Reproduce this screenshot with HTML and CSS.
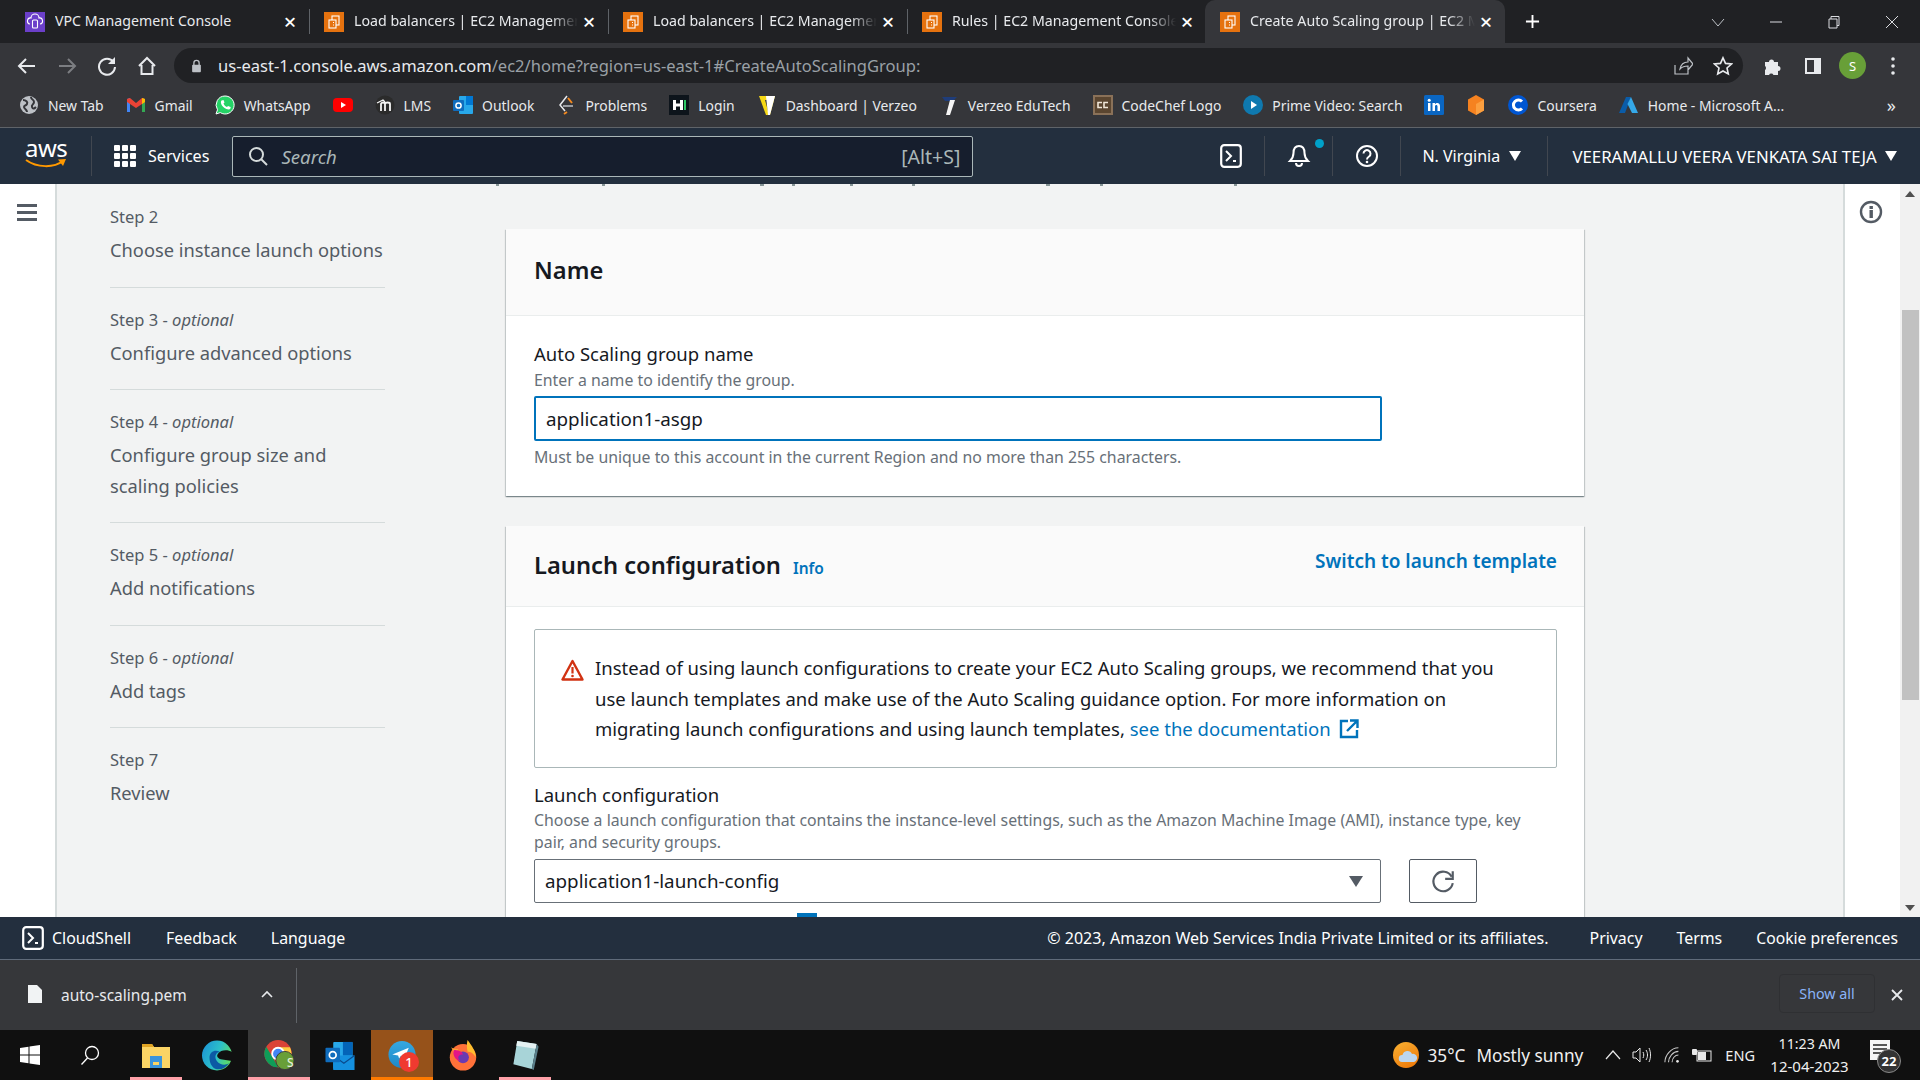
FILE: index.html
```html
<!DOCTYPE html>
<html lang="en">
<head>
<meta charset="utf-8">
<title>Create Auto Scaling group | EC2 Management Console</title>
<link rel="stylesheet" href="styles.css">
</head>
<body>
<svg class="defs" width="0" height="0">
  <defs>
    <linearGradient id="edgeG" x1="0" y1="0" x2="1" y2="0.4"><stop offset="0" stop-color="#1a8fd8"/><stop offset=".6" stop-color="#2cc0c8"/><stop offset="1" stop-color="#5ad96c"/></linearGradient>
    <linearGradient id="sunG" x1="0" y1="0" x2="0.6" y2="1"><stop offset="0" stop-color="#f9b233"/><stop offset="1" stop-color="#ee7d0c"/></linearGradient>
    <linearGradient id="tgG" x1="0" y1="0" x2="0" y2="1"><stop offset="0" stop-color="#36a8e0"/><stop offset="1" stop-color="#1e88c8"/></linearGradient>
  </defs>
  <symbol id="ec2" viewBox="0 0 20 20"><rect width="20" height="20" fill="#e5720f"/><g fill="none" stroke="#fff" stroke-width="1.100"><rect x="8" y="4" width="7" height="9"/><rect x="5" y="8" width="7" height="8" fill="#e5720f"/><path d="M9 10.500h1M9 13h1"/></g></symbol>
  <symbol id="shell" viewBox="0 0 22 24"><rect x="1.200" y="1.200" width="19.600" height="21.600" rx="3" fill="none" stroke="#fff" stroke-width="2.200"/><path d="M6 7l5 5-5 5" fill="none" stroke="#fff" stroke-width="2"/><path d="M13 17h3" stroke="#fff" stroke-width="2"/></symbol>
</svg>
<div class="app">
  <header class="tabstrip">
    <div class="tab">
      <svg class="fav" viewBox="0 0 20 20"><rect width="20" height="20" fill="#6b3fc9"/><g fill="none" stroke="#fff" stroke-width="1.100"><path d="M5 12a3 3 0 0 1 1-6 4 4 0 0 1 8 0 3 3 0 0 1 1 6"/><rect x="7.500" y="8" width="5" height="8" rx="1"/></g></svg>
      <span class="tab-title">VPC Management Console</span><span class="tab-x">×</span>
    </div>
    <div class="tab sep">
      <svg class="fav"><use href="#ec2"/></svg>
      <span class="tab-title">Load balancers | EC2 Management Console</span><span class="tab-x">×</span>
    </div>
    <div class="tab sep">
      <svg class="fav"><use href="#ec2"/></svg>
      <span class="tab-title">Load balancers | EC2 Management Console</span><span class="tab-x">×</span>
    </div>
    <div class="tab sep">
      <svg class="fav"><use href="#ec2"/></svg>
      <span class="tab-title">Rules | EC2 Management Console</span><span class="tab-x">×</span>
    </div>
    <div class="tab active">
      <svg class="fav"><use href="#ec2"/></svg>
      <span class="tab-title">Create Auto Scaling group | EC2 Management</span><span class="tab-x">×</span>
    </div>
    <svg class="newtab" viewBox="0 0 16 16"><path d="M8 1v14M1 8h14" stroke="#fff" stroke-width="2"/></svg>
    <div class="winctl">
      <svg viewBox="0 0 14 14" class="w-ch"><path d="M1 4l6 7 6-7" fill="none" stroke="#bdc1c6" stroke-width="1"/></svg>
      <svg viewBox="0 0 14 14"><path d="M1 7h12" stroke="#dadce0" stroke-width="1"/></svg>
      <svg viewBox="0 0 14 14"><path d="M2 4h8v9H2zM4 4V1.500h8v9h-2" fill="none" stroke="#dadce0" stroke-width="1"/></svg>
      <svg viewBox="0 0 14 14"><path d="M1 1l12 12M13 1L1 13" stroke="#dadce0" stroke-width="1"/></svg>
    </div>
  </header>

  <div class="toolbar">
    <svg class="tb" viewBox="0 0 20 20"><path d="M18 10H3M9 3l-7 7 7 7" fill="none" stroke="#e8eaed" stroke-width="2"/></svg>
    <svg class="tb" viewBox="0 0 20 20"><path d="M2 10h15M11 3l7 7-7 7" fill="none" stroke="#7c7e82" stroke-width="2"/></svg>
    <svg class="tb" viewBox="0 0 20 20"><path d="M16.500 6A8 8 0 1 0 18 11" fill="none" stroke="#e8eaed" stroke-width="2"/><path d="M18 1v7h-7z" fill="#e8eaed"/></svg>
    <svg class="tb" viewBox="0 0 20 20"><path d="M2 10l8-8 8 8M4.500 9v9h11V9" fill="none" stroke="#e8eaed" stroke-width="2"/></svg>
    <div class="urlbar">
      <svg class="lock" viewBox="0 0 12 16"><path d="M3 7V4.500a3 3 0 0 1 6 0V7" fill="none" stroke="#bdc1c6" stroke-width="1.500"/><rect x="1" y="6.500" width="10" height="8.500" rx="1" fill="#bdc1c6"/></svg>
      <span class="url"><b>us-east-1.console.aws.amazon.com</b>/ec2/home?region=us-east-1#CreateAutoScalingGroup:</span>
      <svg class="share" viewBox="0 0 20 20"><path d="M2 9v9h13v-4M7 13c1-5 4-7 8-7V2l5 6-5 6v-4c-3 0-6 1-8 3z" fill="none" stroke="#bdc1c6" stroke-width="1.200"/></svg>
      <svg class="star" viewBox="0 0 20 20"><path d="M10 1.800l2.500 5.600 6 .6-4.500 4 1.300 6L10 15l-5.300 3 1.300-6-4.500-4 6-.6z" fill="none" stroke="#e8eaed" stroke-width="1.600"/></svg>
    </div>
    <svg class="ext" viewBox="0 0 20 20"><path d="M2 6h4a2.500 2.500 0 0 1 5 0h4v4a2.500 2.500 0 0 1 0 5v4h-4.500a2.500 2.500 0 0 0-4.500 0H2v-5a2.500 2.500 0 0 0 0-4z" fill="#e8eaed"/></svg>
    <svg class="side" viewBox="0 0 20 20"><rect x="2" y="2" width="16" height="16" fill="#e8eaed"/><rect x="4" y="4" width="7" height="12" fill="#35363a"/></svg>
    <span class="avatar">S</span>
    <svg class="dots" viewBox="0 0 4 18"><circle cx="2" cy="2" r="1.800" fill="#e8eaed"/><circle cx="2" cy="9" r="1.800" fill="#e8eaed"/><circle cx="2" cy="16" r="1.800" fill="#e8eaed"/></svg>
  </div>

  <nav class="bookmarks">
    <span class="bm"><svg viewBox="0 0 20 20"><circle cx="10" cy="10" r="9" fill="#bdc1c6"/><path d="M4 5c3 0 5 2 4 4s-3 1-3 3 3 2 3 5M12 2c0 3 3 2 3 5s-3 2-2 5 3 1 4 0" fill="none" stroke="#35363a" stroke-width="2"/></svg>New Tab</span>
    <span class="bm"><svg viewBox="0 0 20 20"><path d="M1 17V4l3-1v14z" fill="#4285f4"/><path d="M16 17V3l3 1v13z" fill="#34a853"/><path d="M1 4l3-1 6 5 6-5 3 1v3l-9 6-9-6z" fill="#ea4335"/><path d="M16 3l3 1v3l-3 2z" fill="#fbbc04"/></svg>Gmail</span>
    <span class="bm"><svg viewBox="0 0 20 20"><path d="M10 1a9 9 0 0 0-7.500 13.800L1 19l4.300-1.400A9 9 0 1 0 10 1z" fill="#25d366" stroke="#fff" stroke-width="1"/><path d="M6.500 5.500c-2 2 1 8 7 9 2 0 2.500-2 2-2.500l-2.500-1-1 1c-1.500-.5-3-2-3.500-3.500l1-1-1-2.500z" fill="#fff"/></svg>WhatsApp</span>
    <span class="bm"><svg viewBox="0 0 20 20"><rect y="3" width="20" height="14" rx="4" fill="#f00"/><path d="M8 7l5 3-5 3z" fill="#fff"/></svg></span>
    <span class="bm"><svg viewBox="0 0 20 20"><circle cx="10" cy="10" r="9.500" fill="#2b2b2b"/><path d="M6 16V9c0-2 4-2 4 0v7M10 9c0-2 5-2 5 0v7" fill="none" stroke="#f5f5f5" stroke-width="1.800"/><path d="M2 8l6-3 2 2" fill="none" stroke="#f5f5f5" stroke-width="1.300"/></svg>LMS</span>
    <span class="bm"><svg viewBox="0 0 20 20"><rect x="6" y="1" width="14" height="18" rx="1" fill="#28a8ea"/><rect x="13" y="1" width="7" height="9" fill="#0078d4"/><rect y="5" width="11" height="11" rx="1" fill="#0f6cbd"/><circle cx="5.500" cy="10.500" r="2.600" fill="none" stroke="#fff" stroke-width="1.500"/></svg>Outlook</span>
    <span class="bm"><svg viewBox="0 0 20 20"><path d="M11 1L4 10l5 6" fill="none" stroke="#e8eaed" stroke-width="1.500"/><path d="M12 3l4 5M8 19l3-2" stroke="#f58a1f" stroke-width="2"/><path d="M7 11h10" stroke="#bdc1c6" stroke-width="1.500"/></svg>Problems</span>
    <span class="bm"><svg viewBox="0 0 20 20"><rect width="20" height="20" fill="#0d141b"/><rect x="4" y="5" width="3" height="10" fill="#fff"/><rect x="7" y="8.500" width="4" height="3" fill="#fff"/><rect x="11" y="5" width="3" height="10" fill="#fff"/><rect x="15" y="5" width="2" height="10" fill="#2ec866"/></svg>Login</span>
    <span class="bm"><svg viewBox="0 0 20 20"><path d="M2 1h16l-5 19H9z" fill="#f6d916"/><path d="M8 5h5l-2 11z" fill="#35363a"/><path d="M9 1h9l-5 19h-2z" fill="#fff"/></svg>Dashboard | Verzeo</span>
    <span class="bm"><svg viewBox="0 0 20 20"><path d="M3 2h15l-4 4H6z" fill="#1f3d7a"/><path d="M11 5h5l-5 15H7z" fill="#f5f5f5"/></svg>Verzeo EduTech</span>
    <span class="bm"><svg viewBox="0 0 20 20"><rect width="20" height="20" fill="#8a7158"/><rect x="2" y="2" width="16" height="16" fill="#5b4630"/><path d="M9 7.500H5v5h4M15 7.500h-4v5h4" fill="none" stroke="#f0e6d8" stroke-width="1.600"/></svg>CodeChef Logo</span>
    <span class="bm"><svg viewBox="0 0 20 20"><circle cx="10" cy="10" r="10" fill="#0f79af"/><path d="M8 6l6 4-6 4z" fill="#fff"/></svg>Prime Video: Search</span>
    <span class="bm"><svg viewBox="0 0 20 20"><rect width="20" height="20" rx="1.500" fill="#0a66c2"/><path d="M4 8h2.500v8H4zM8.500 8H11v1.200C12.500 7 16 7.500 16 11v5h-2.500v-4.500c0-2-2.500-2-2.500 0V16H8.500z" fill="#fff"/><circle cx="5.200" cy="5.300" r="1.500" fill="#fff"/></svg></span>
    <span class="bm"><svg viewBox="0 0 20 20"><path d="M10 0l8 4.500v11L10 20l-8-4.500v-11z" fill="#f58220"/><path d="M10 9l8-4.500v11L10 20z" fill="#fb9f3f"/></svg></span>
    <span class="bm"><svg viewBox="0 0 20 20"><circle cx="10" cy="10" r="10" fill="#0056d2"/><path d="M14 6.500A5 5 0 1 0 14 13.500" fill="none" stroke="#fff" stroke-width="3"/></svg>Coursera</span>
    <span class="bm"><svg viewBox="0 0 20 20"><path d="M7 2h5L6 18H0z" fill="#0a5ca8"/><path d="M12 2l7 16h-6L8.500 9z" fill="#35a8e8"/></svg>Home - Microsoft A...</span>
    <span class="more">»</span>
  </nav>

  <div class="awsnav">
    <div class="logo"><span class="logo-t">aws</span><svg viewBox="0 0 42 10"><path d="M1 2c11 8 28 8 37 1" fill="none" stroke="#f90" stroke-width="2"/><path d="M33 1.500l8-.5-3 7z" fill="#f90"/></svg></div>
    <div class="services">
      <svg viewBox="0 0 22 22"><g fill="#fff"><rect width="6" height="6" rx="1"/><rect x="8" width="6" height="6" rx="1"/><rect x="16" width="6" height="6" rx="1"/><rect y="8" width="6" height="6" rx="1"/><rect x="8" y="8" width="6" height="6" rx="1"/><rect x="16" y="8" width="6" height="6" rx="1"/><rect y="16" width="6" height="6" rx="1"/><rect x="8" y="16" width="6" height="6" rx="1"/><rect x="16" y="16" width="6" height="6" rx="1"/></g></svg>
      <span>Services</span>
    </div>
    <div class="search">
      <svg viewBox="0 0 20 20"><circle cx="8.500" cy="8.500" r="6.500" fill="none" stroke="#d5dbdb" stroke-width="2"/><path d="M13 13l6 6" stroke="#d5dbdb" stroke-width="2"/></svg>
      <span class="ph">Search</span><span class="key">[Alt+S]</span>
    </div>
    <div class="nav-icons">
      <span class="ni"><svg class="s-ic" viewBox="0 0 22 24"><use href="#shell"/></svg></span>
      <span class="ni bell"><svg viewBox="0 0 22 24"><path d="M11 2c-4 0-5.500 3-5.500 7 0 4-1.500 6-3.500 8h18c-2-2-3.500-4-3.500-8 0-4-1.500-7-5.500-7z" fill="none" stroke="#fff" stroke-width="2"/><path d="M8 19a3 3 0 0 0 6 0" fill="none" stroke="#fff" stroke-width="2"/></svg><i class="dot"></i></span>
      <span class="ni"><svg viewBox="0 0 24 24"><circle cx="12" cy="12" r="10" fill="none" stroke="#fff" stroke-width="2"/><path d="M8.500 9.500a3.500 3.500 0 1 1 5.500 3c-1.300.8-2 1.300-2 3" fill="none" stroke="#fff" stroke-width="2"/><circle cx="12" cy="18" r="1.300" fill="#fff"/></svg></span>
    </div>
    <div class="region">N. Virginia<i class="caret"></i></div>
    <div class="user">VEERAMALLU VEERA VENKATA SAI TEJA<i class="caret"></i></div>
  </div>

  <div class="stage">
    <aside class="rail"><i class="ham"></i><i class="ham"></i><i class="ham"></i></aside>
    <main class="main">
      <svg class="peek-top" viewBox="0 0 750 3"><g fill="#879596"><rect x="0" width="3" height="2"/><rect x="106" width="3" height="2"/><rect x="264" width="4" height="2"/><rect x="296" width="3" height="2"/><rect x="354" width="3" height="2"/><rect x="416" width="3" height="2"/><rect x="550" width="4" height="2"/><rect x="604" width="3" height="2"/><rect x="738" width="3" height="2"/></g></svg>
      <ol class="steps">
        <li class="step"><div class="step-no">Step 2</div><div class="step-t">Choose instance launch options</div></li>
        <li class="step"><div class="step-no">Step 3 - <em>optional</em></div><div class="step-t">Configure advanced options</div></li>
        <li class="step"><div class="step-no">Step 4 - <em>optional</em></div><div class="step-t">Configure group size and scaling policies</div></li>
        <li class="step"><div class="step-no">Step 5 - <em>optional</em></div><div class="step-t">Add notifications</div></li>
        <li class="step"><div class="step-no">Step 6 - <em>optional</em></div><div class="step-t">Add tags</div></li>
        <li class="step"><div class="step-no">Step 7</div><div class="step-t">Review</div></li>
      </ol>
      <div class="form">
        <section class="card">
          <div class="card-h name-h"><h2>Name</h2></div>
          <div class="card-b name-b">
            <div class="lbl">Auto Scaling group name</div>
            <div class="desc first">Enter a name to identify the group.</div>
            <div class="input focus">application1-asgp</div>
            <div class="desc hint">Must be unique to this account in the current Region and no more than 255 characters.</div>
          </div>
        </section>
        <section class="card second">
          <div class="card-h lc-h">
            <h2>Launch configuration</h2><a class="info">Info</a>
            <a class="switch">Switch to launch template</a>
          </div>
          <div class="card-b lc-b">
            <div class="alert">
              <svg class="warn" viewBox="0 0 23 22"><path d="M11.500 2L1.500 20.500h20z" fill="none" stroke="#d13212" stroke-width="2.400" stroke-linejoin="round"/><path d="M11.500 8v6.500" stroke="#d13212" stroke-width="2.200"/><circle cx="11.500" cy="17" r="1.300" fill="#d13212"/></svg>
              <p>Instead of using launch configurations to create your EC2 Auto Scaling groups, we recommend that you use launch templates and make use of the Auto Scaling guidance option. For more information on migrating launch configurations and using launch templates, <a class="doc">see the documentation<svg class="ext-l" viewBox="0 0 20 20"><path d="M9 2H2v16h16v-7" fill="none" stroke="#0073bb" stroke-width="2.400"/><path d="M8 12l10-10M11 1.500h7.500V9" fill="none" stroke="#0073bb" stroke-width="2.400"/></svg></a></p>
            </div>
            <div class="lbl lc-lbl">Launch configuration</div>
            <div class="desc lc-desc">Choose a launch configuration that contains the instance-level settings, such as the Amazon Machine Image (AMI), instance type, key pair, and security groups.</div>
            <div class="sel-row">
              <div class="input sel">application1-launch-config<i class="sel-caret"></i></div>
              <button class="refresh"><svg viewBox="0 0 24 24"><path d="M20 8A9 9 0 1 0 21 14" fill="none" stroke="#545b64" stroke-width="2"/><path d="M21 3v7h-7" fill="none" stroke="#545b64" stroke-width="2"/></svg></button>
            </div>
          </div>
        </section>
      </div>
      <i class="peek-bot"></i>
    </main>
    <aside class="tools">
      <svg viewBox="0 0 24 24"><circle cx="12" cy="12" r="10" fill="none" stroke="#545b64" stroke-width="2.400"/><rect x="10.500" y="10" width="3.400" height="8" fill="#545b64"/><rect x="10.500" y="6" width="3.400" height="3" fill="#545b64"/></svg>
    </aside>
    <div class="scrollbar"><i class="sb-up"></i><i class="thumb"></i><i class="sb-dn"></i></div>
  </div>

  <footer class="footer">
    <svg class="f-shell" viewBox="0 0 22 24"><use href="#shell"/></svg>
    <span class="f-cs">CloudShell</span><span class="f-fb">Feedback</span><span class="f-lang">Language</span>
    <span class="f-copy">© 2023, Amazon Web Services India Private Limited or its affiliates.</span>
    <span class="f-pr">Privacy</span><span class="f-tm">Terms</span><span class="f-ck">Cookie preferences</span>
  </footer>

  <div class="downloads">
    <svg class="dl-file" viewBox="0 0 14 18"><path d="M0 0h9l5 5v13H0z" fill="#f1f3f4"/></svg>
    <span class="dl-name">auto-scaling.pem</span>
    <svg class="dl-up" viewBox="0 0 12 8"><path d="M1 7l5-5 5 5" fill="none" stroke="#e8eaed" stroke-width="1.600"/></svg>
    <i class="dl-sep"></i>
    <span class="showall">Show all</span>
    <svg class="dl-x" viewBox="0 0 12 12"><path d="M1 1l10 10M11 1L1 11" stroke="#e8eaed" stroke-width="1.800"/></svg>
  </div>

  <div class="taskbar">
    <svg class="t-win" viewBox="0 0 20 20"><path d="M0 3l8.500-1.200V9.500H0zM9.500 1.600L20 0v9.500H9.500zM0 10.500h8.500v7.700L0 17zM9.500 10.500H20V20L9.500 18.400z" fill="#fff"/></svg>
    <svg class="t-search" viewBox="0 0 20 20"><circle cx="12" cy="8" r="6.500" fill="none" stroke="#fff" stroke-width="1.300"/><path d="M7.500 13L1.500 19.500" stroke="#fff" stroke-width="1.300"/></svg>
    <span class="t-app under"><svg viewBox="0 0 30 31"><path d="M1 4h10l2 3h16v21H1z" fill="#fbd465"/><path d="M1 4h10l2 3H1z" fill="#e0a424"/><path d="M9 16h12v12h-3v-6h-6v6H9z" fill="#3b94dc"/><rect x="12" y="25" width="6" height="3" fill="#3b94dc"/></svg></span>
    <span class="t-app"><svg viewBox="0 0 32 32"><circle cx="16" cy="16" r="16" fill="url(#edgeG)"/><path d="M33 13C28 9 20 10 17 14c-2 3 0 5 3 6l13 2z" fill="#101010"/><path d="M8 18c0-6 6-9 11-6-5 1-6 6-3 10 3 4 9 5 13 2-4 6-10 8-15 6-4-2-6-7-6-12z" fill="#0c59a4"/></svg></span>
    <span class="t-app active"><svg viewBox="0 0 32 34"><circle cx="15" cy="15" r="15" fill="#db4437"/><path d="M15 8h13a15 15 0 0 1-13 22l6-11z" fill="#ffcd40"/><path d="M15 30A15 15 0 0 1 2 7.500L9 19z" fill="#0f9d58"/><circle cx="15" cy="15" r="6.500" fill="#4285f4" stroke="#fff" stroke-width="2"/><circle cx="22.500" cy="22.500" r="10" fill="#689f38" stroke="#383838" stroke-width="1"/></svg><b class="ch-s">S</b></span>
    <span class="t-app"><svg viewBox="0 0 30 32"><rect x="8" y="2" width="20" height="28" rx="1" fill="#28a8ea"/><rect x="18" y="2" width="10" height="14" fill="#0364b8"/><path d="M8 16h22v15H8z" fill="#1490df"/><path d="M8 16l11 8 11-8" fill="none" stroke="#0a4a8c" stroke-width="1.200"/><rect y="8" width="15" height="15" rx="1" fill="#0f6cbd"/><circle cx="7.500" cy="15.500" r="3.500" fill="none" stroke="#fff" stroke-width="1.800"/></svg></span>
    <span class="t-app tg"><svg viewBox="0 0 28 32"><circle cx="14" cy="15" r="14" fill="url(#tgG)"/><path d="M4 15l17-7-5 12-3-4-2 3-1-3z" fill="#fff"/></svg><b class="badge">1</b></span>
    <span class="t-app"><svg viewBox="0 0 30 34"><circle cx="15" cy="19" r="14.500" fill="#ff7139"/><path d="M20 0c5 7 9 12 9 19-3-5-6-6-9-6-1-5-1-9 0-13z" fill="#ffbd2e"/><path d="M2 8c2 2 5 2 8 2l-4 6z" fill="#ffa436"/><circle cx="15" cy="19" r="6.500" fill="#6a3ab2"/><path d="M5 11c4 0 9 1 10 5-5-1-7 4-3 7-5 0-9-7-7-12z" fill="#e31587"/></svg></span>
    <span class="t-app under"><svg viewBox="0 0 30 32"><path d="M7 1l20 3-5 26-19-5z" fill="#a8d4d8"/><path d="M7 1l20 3-1 5-20-3z" fill="#e5f1f2"/><path d="M27 4l2 3-5 24-2-1z" fill="#5a7f8a"/></svg></span>
    <div class="tray">
      <svg class="wx" viewBox="0 0 26 26"><circle cx="13" cy="13" r="13" fill="url(#sunG)"/><path d="M9 20a3.500 3.500 0 0 1 .5-7 5 5 0 0 1 9.500-1 4 4 0 0 1 2 8z" fill="#bcd6ef"/></svg>
      <span class="temp">35°C</span><span class="wx-t">Mostly sunny</span>
      <svg class="tr-up" viewBox="0 0 16 10"><path d="M1 9l7-8 7 8" fill="none" stroke="#e8e8e8" stroke-width="1.200"/></svg>
      <svg class="tr-sp" viewBox="0 0 20 20"><path d="M1 7h3l4-4v14l-4-4H1zM11 7c1 2 1 4 0 6M14 5c2 3 2 7 0 10M17 3c2 4 2 10 0 14" fill="none" stroke="#e8e8e8" stroke-width="1"/></svg>
      <svg class="tr-wi" viewBox="0 0 20 20"><path d="M1 18C1 10 8 2 16 2M5 18c0-6 5-12 11-12M9 18c0-4 3-8 7-8" fill="none" stroke="#c8c8c8" stroke-width="1.200"/><circle cx="15" cy="17" r="1.500" fill="#e8e8e8"/></svg>
      <svg class="tr-bt" viewBox="0 0 20 20"><rect x="5" y="6" width="14" height="10" fill="none" stroke="#e8e8e8"/><rect x="6" y="7" width="8" height="8" fill="#e8e8e8"/><rect x="0" y="4" width="5" height="6" rx="1" fill="#e8e8e8"/></svg>
      <span class="eng">ENG</span>
      <div class="clock"><span>11:23 AM</span><span class="date">12-04-2023</span></div>
      <span class="notif"><svg viewBox="0 0 20 20"><rect width="20" height="20" fill="#f5f5f5"/><path d="M3 5h14M3 9h14M3 13h9" stroke="#222" stroke-width="1.500"/></svg><b>22</b></span>
    </div>
  </div>
</div>
</body>
</html>
```
FILE: styles.css
```css
* { box-sizing: border-box; }
html, body { margin: 0; padding: 0; height: 100%; overflow: hidden; }
body { font-family: "Noto Sans", "Open Sans", sans-serif; color: #16191f; }
.defs { position: absolute; }
i { display: block; font-style: normal; }
.app { width: 1920px; height: 1080px; display: flex; flex-direction: column; }

/* tab strip */
.tabstrip { height: 43px; background: #202124; display: flex; align-items: stretch; padding-left: 10px; color: #e8eaed; font-size: 14.200px; flex: none; }
.tab { width: 299px; display: flex; align-items: center; padding: 0 8px 0 15px; position: relative; }
.tab.sep::before { content: ""; position: absolute; left: 0; top: 9px; height: 25px; width: 1px; background: #5f6368; }
.tab.active { background: #35363a; border-radius: 10px 10px 0 0; width: 300px; margin-left: -1px; padding-left: 15px; }
.fav { width: 20px; height: 20px; flex: none; margin-right: 10px; }
.tab-title { flex: 1; min-width: 0; white-space: nowrap; overflow: hidden; padding-bottom: 3px; -webkit-mask-image: linear-gradient(90deg, #000 88%, transparent 100%); mask-image: linear-gradient(90deg, #000 88%, transparent 100%); }
.tab:first-child .tab-title { mask-image: none; -webkit-mask-image: none; }
.tab-x { width: 22px; text-align: center; color: #fff; font-size: 22px; line-height: 1; font-weight: 500; flex: none; padding-bottom: 2px; }
.newtab { width: 15px; height: 15px; align-self: center; margin-left: 20px; flex: none; }
.winctl { margin-left: auto; display: flex; align-items: center; padding-right: 21px; gap: 44px; }
.winctl svg { width: 14px; height: 14px; }

/* toolbar */
.toolbar { height: 42px; background: #35363a; display: flex; align-items: center; padding-left: 17px; flex: none; padding-top: 3px; }
.tb { width: 20px; height: 20px; margin-right: 20px; flex: none; }
.urlbar { width: 1569px; height: 35px; margin-left: -3px; background: #202124; border-radius: 18px; display: flex; align-items: center; padding-left: 17px; flex: none; }
.lock { width: 11px; height: 14px; flex: none; margin-right: 16px; }
.url { font-size: 16.550px; color: #9aa0a6; white-space: nowrap; flex: 1; }
.url b { color: #e8eaed; font-weight: 400; }
.share { width: 20px; height: 20px; margin-right: 20px; flex: none; }
.star { width: 20px; height: 20px; margin-right: 10px; flex: none; }
.ext { width: 20px; height: 20px; margin-left: 20px; flex: none; }
.side { width: 20px; height: 20px; margin-left: 20px; flex: none; }
.avatar { width: 27px; height: 27px; border-radius: 50%; background: #689f38; color: #fff; font-size: 13px; display: flex; align-items: center; justify-content: center; margin-left: 16px; flex: none; }
.dots { width: 4px; height: 18px; margin-left: 25px; flex: none; }

/* bookmarks */
.bookmarks { height: 43px; background: #35363a; border-bottom: 1px solid #5f6368; display: flex; align-items: center; padding-left: 19px; gap: 22px; flex: none; color: #e8eaed; font-size: 13.900px; white-space: nowrap; padding-bottom: 2px; }
.bm { display: flex; align-items: center; gap: 9px; }
.bm svg { width: 20px; height: 20px; flex: none; }
.more { margin-left: auto; margin-right: 24px; font-size: 18px; }

/* aws nav */
.awsnav { height: 56px; background: #232f3e; display: flex; align-items: center; flex: none; color: #fff; font-size: 16px; }
.logo { width: 92px; height: 40px; border-right: 1px solid #414750; padding-left: 25px; position: relative; display: flex; flex-direction: column; align-items: flex-start; flex: none; }
.logo-t { font-size: 24px; line-height: 22px; font-weight: 400; letter-spacing: -.5px; margin-top: 1px; }
.logo svg { width: 42px; height: 10px; margin-top: -1px; }
.services { display: flex; align-items: center; gap: 12px; margin-left: 22px; flex: none; font-size: 16.100px; }
.services svg { width: 22px; height: 22px; }
.search { width: 741px; height: 41px; margin-left: 23px; background: #161e2d; border: 1px solid #aab7b8; border-radius: 2px; display: flex; align-items: center; padding: 0 12px 0 15px; flex: none; color: #aab7b8; font-size: 18.600px; }
.search svg { width: 20px; height: 20px; margin-right: 13px; }
.ph { font-style: italic; flex: 1; }
.key { font-size: 19.500px; }
.nav-icons { display: flex; margin-left: 224px; flex: none; }
.ni { width: 68px; height: 40px; display: flex; align-items: center; justify-content: center; border-right: 1px solid #414750; position: relative; }
.ni svg { width: 24px; height: 24px; }
.ni .s-ic { width: 22px; height: 24px; }
.dot { position: absolute; width: 9px; height: 9px; border-radius: 50%; background: #00a1c9; right: 8px; top: 3px; }
.region { width: 147px; padding-left: 21px; height: 40px; border-right: 1px solid #414750; display: flex; align-items: center; gap: 9px; flex: none; white-space: nowrap; }
.user { padding-left: 24px; display: flex; align-items: center; gap: 8px; white-space: nowrap; flex: none; font-size: 16.800px; }
.caret { width: 0; height: 0; border-left: 6px solid transparent; border-right: 6px solid transparent; border-top: 10px solid #fff; flex: none; }

/* stage */
.stage { height: 733px; display: flex; flex: none; overflow: hidden; }
.rail { width: 57px; background: #fff; border-right: 2px solid #d5dbdb; flex: none; padding: 20px 0 0 17px; }
.ham { width: 20px; height: 3px; background: #545b64; margin-bottom: 4px; }
.main { width: 1786px; flex: none; background: #f2f3f3; display: flex; position: relative; overflow: hidden; }
.peek-top { position: absolute; left: 439px; top: 0; width: 750px; height: 3px; }
.peek-bot { position: absolute; left: 740px; bottom: 0; width: 20px; height: 4px; background: #0073bb; }
.steps { list-style: none; margin: 0 0 0 53px; padding: 0; width: 275px; flex: none; }
.step { padding: 20px 0 21px; border-bottom: 1px solid #d5dbdb; }
.step:first-child { padding-top: 21px; }
.step:last-child { border-bottom: 0; }
.step-no { font-size: 16.500px; line-height: 24px; color: #545b64; }
.step-t { font-size: 18.300px; line-height: 30.500px; color: #545b64; margin-top: 6px; }
.form { width: 1078px; margin-left: 121px; padding-top: 45px; flex: none; }
.card { background: #fff; box-shadow: 0 1px 1px 0 rgba(0,28,36,.3), 1px 1px 1px 0 rgba(0,28,36,.15), -1px 1px 1px 0 rgba(0,28,36,.15); }
.card.second { margin-top: 30px; }
.card-h { background: #fafafa; border-bottom: 1px solid #eaeded; padding: 0 27px 0 28px; display: flex; align-items: center; }
.name-h { height: 87px; padding-bottom: 4px; }
.lc-h { height: 81px; padding-bottom: 2px; }
h2 { margin: 0; font-size: 23.700px; font-weight: 600; line-height: 30px; }
.info { color: #0073bb; font-size: 15.500px; font-weight: 600; margin-left: 12px; padding-top: 5px; }
.switch { margin-left: auto; color: #0073bb; font-size: 19px; font-weight: 600; margin-bottom: 8px; }
.name-b { padding: 26px 28px 28px; }
.lc-b { padding: 22px 27px 100px 28px; }
.lbl { font-size: 18.500px; line-height: 24px; }
.desc { font-size: 15.850px; line-height: 22px; color: #687078; }
.desc.first { margin-top: 3px; }
.desc.hint { margin-top: 5px; }
.input { width: 848px; height: 45px; border: 2px solid #0073bb; border-radius: 2px; font-size: 18.800px; display: flex; align-items: center; padding-left: 10px; margin-top: 5px; }
.alert { height: 139px; border: 1px solid #aab7b8; border-radius: 2px; padding: 23px 40px 0 26px; display: flex; align-items: flex-start; background: #fff; }
.warn { width: 23px; height: 22px; flex: none; margin: 6px 11px 0 0; }
.alert p { margin: 0; font-size: 18.500px; line-height: 30.500px; }
.doc { color: #0073bb; }
.ext-l { width: 20px; height: 20px; margin-left: 8px; vertical-align: -3px; }
.lc-lbl { margin-top: 15px; }
.lc-desc { width: 1020px; margin-top: 2px; }
.sel-row { display: flex; gap: 28px; margin-top: 6px; }
.input.sel { width: 847px; height: 44px; margin: 0; border: 1px solid #687078; padding-left: 10px; position: relative; justify-content: space-between; padding-right: 17px; }
.sel-caret { width: 0; height: 0; border-left: 7px solid transparent; border-right: 7px solid transparent; border-top: 11px solid #545b64; }
.refresh { width: 68px; height: 44px; background: #fff; border: 1px solid #545b64; border-radius: 2px; padding: 0; display: flex; align-items: center; justify-content: center; }
.refresh svg { width: 26px; height: 26px; }
.tools { width: 57px; background: #fff; border-left: 2px solid #d5dbdb; flex: none; padding: 16px 0 0 14px; }
.tools svg { width: 24px; height: 24px; display: block; }
.scrollbar { width: 20px; background: #f1f1f1; flex: none; display: flex; flex-direction: column; align-items: center; padding-top: 7px; }
.sb-up { border-left: 5px solid transparent; border-right: 5px solid transparent; border-bottom: 6px solid #505050; width: 0; }
.sb-dn { border-left: 5px solid transparent; border-right: 5px solid transparent; border-top: 6px solid #505050; width: 0; margin-top: 205px; }
.thumb { width: 17px; height: 390px; background: #c1c1c1; margin-top: 113px; flex: none; }

/* footer */
.footer { height: 43px; background: #232f3e; border-bottom: 1px solid #5f6b7a; color: #fff; display: flex; align-items: center; flex: none; font-size: 15.900px; white-space: nowrap; }
.f-shell { width: 22px; height: 24px; margin-left: 22px; flex: none; }
.f-cs { margin-left: 8px; }
.f-fb { margin-left: 35px; }
.f-lang { margin-left: 34px; }
.f-copy { margin-left: auto; font-size: 16.050px; }
.f-pr { margin-left: 41px; }
.f-tm { margin-left: 34px; }
.f-ck { margin-left: 34px; margin-right: 22px; font-size: 15.700px; }

/* downloads */
.downloads { height: 70px; background: #36373a; display: flex; align-items: center; flex: none; color: #e8eaed; }
.dl-file { width: 14px; height: 18px; margin-left: 28px; flex: none; margin-bottom: 2px; }
.dl-name { font-size: 15.500px; margin-left: 19px; width: 200px; flex: none; }
.dl-up { width: 12px; height: 8px; flex: none; margin-bottom: 2px; }
.dl-sep { width: 1px; height: 55px; background: #5f6368; margin-left: 23px; flex: none; }
.showall { margin-left: auto; width: 96px; height: 39px; border: 1px solid #2f3033; border-radius: 4px; color: #8ab4f8; font-size: 14.300px; display: flex; align-items: center; justify-content: center; flex: none; margin-bottom: 4px; }
.dl-x { width: 12px; height: 12px; margin: 0 17px 0 16px; flex: none; }

/* taskbar */
.taskbar { height: 50px; background: #101010; display: flex; align-items: center; flex: none; color: #f0f0f0; }
.t-win { width: 20px; height: 20px; margin-left: 20px; flex: none; }
.t-search { width: 20px; height: 20px; margin: 0 25px 0 40px; flex: none; }
.t-app { width: 61.500px; height: 50px; display: flex; align-items: center; justify-content: center; flex: none; position: relative; }
.t-app svg { width: 30px; height: 31px; }
.t-app::after { content: ""; position: absolute; bottom: 0; height: 3px; left: 5px; right: 5px; }
.t-app.under::after { background: #ffa0a8; }
.t-app.active { background: #383838; }
.t-app.active::after { background: #ffa0a8; left: 0; right: 0; }
.t-app.tg { background: #96521a; }
.t-app.tg::after { background: #ff7a00; left: 0; right: 0; }
.ch-s { position: absolute; left: 39px; top: 24px; font-size: 12px; color: #e4f0d8; font-weight: 500; }
.badge { position: absolute; left: 28px; top: 22px; width: 20px; height: 20px; border-radius: 50%; background: #f03a30; color: #fff; font-size: 13px; font-weight: 500; display: flex; align-items: center; justify-content: center; }
.tray { margin-left: auto; display: flex; align-items: center; height: 50px; flex: none; white-space: nowrap; }
.wx { width: 26px; height: 26px; flex: none; }
.temp { font-size: 17.200px; margin-left: 9px; }
.wx-t { font-size: 17.200px; margin-left: 11px; }
.tr-up { width: 16px; height: 10px; margin-left: 22px; flex: none; }
.tr-sp { width: 20px; height: 20px; margin-left: 11px; flex: none; }
.tr-wi { width: 18px; height: 18px; margin-left: 12px; flex: none; }
.tr-bt { width: 20px; height: 20px; margin-left: 10px; flex: none; }
.eng { font-size: 14.500px; margin-left: 13px; }
.clock { display: flex; flex-direction: column; align-items: center; font-size: 14.200px; line-height: 23px; margin-left: 16px; width: 77px; }
.date { font-size: 15px; }
.notif { width: 24px; height: 30px; margin: 0 26px 0 22px; position: relative; flex: none; display: block; }
.notif svg { width: 20px; height: 20px; display: block; }
.notif b { position: absolute; left: 7px; top: 9px; width: 24px; height: 24px; border-radius: 50%; background: #333; border: 1px solid #888; color: #fff; font-size: 13px; font-weight: 700; display: flex; align-items: center; justify-content: center; }
```
